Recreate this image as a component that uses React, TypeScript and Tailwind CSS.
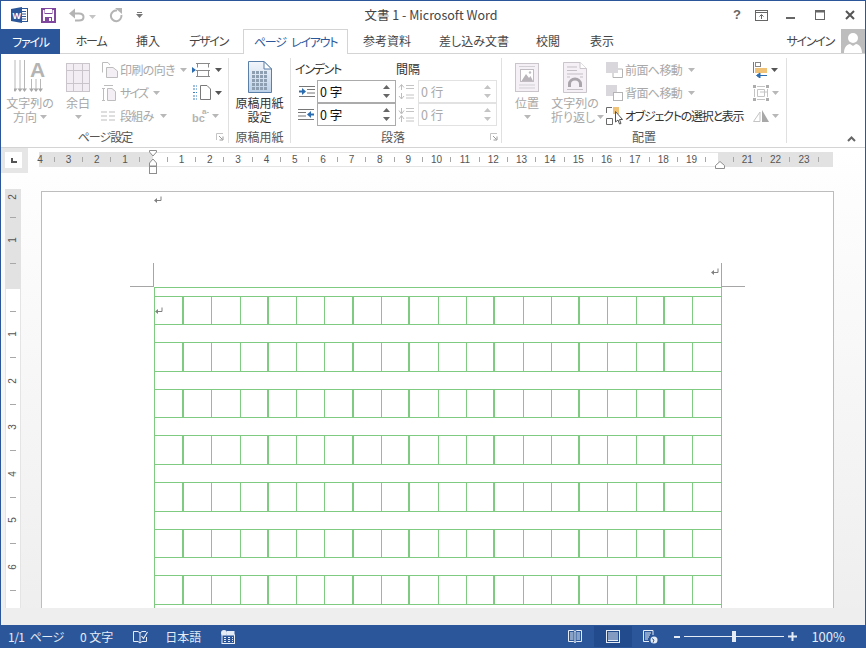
import React from "react";

const GREEN = "border-[#7fcb82]";

function Caret({ c = "#b8b8b8" }: { c?: string }) {
  return (
    <svg width="7" height="4" viewBox="0 0 7 4" className="inline-block shrink-0">
      <path d="M0 0h7L3.5 4z" fill={c} />
    </svg>
  );
}

function ReturnMark() {
  return (
    <svg width="8" height="8" viewBox="0 0 8 8" className="shrink-0">
      <path d="M7 0.5V4.5H2" fill="none" stroke="#808080" />
      <path d="M0 4.5L3 2V7z" fill="#808080" />
    </svg>
  );
}

function Launcher() {
  return (
    <svg width="8" height="8" viewBox="0 0 8 8" className="shrink-0">
      <path d="M0.5 7V0.5H7" fill="none" stroke="#c4c4c4" />
      <path d="M3 3L6.5 6.5M7 3.5V7H3.5" fill="none" stroke="#9a9a9a" />
    </svg>
  );
}

function WordLogo() {
  return (
    <svg width="17" height="16" viewBox="0 0 17 16">
      <rect x="7.5" y="1.5" width="9" height="13" fill="#fff" stroke="#2b579a" />
      <path d="M11 4.5h4M11 7h4M11 9.5h4M11 12h4" stroke="#2b579a" />
      <path d="M0 2L11 0V16L0 14z" fill="#2b579a" />
      <text x="1.5" y="11.5" fontSize="9" fontWeight="700" fill="#fff" fontFamily="Liberation Sans">W</text>
    </svg>
  );
}

function SaveIcon() {
  return (
    <svg width="15" height="15" viewBox="0 0 15 15">
      <path d="M1 1H14V14H1z" fill="#fff" stroke="#80479e" strokeWidth="2" />
      <rect x="3.5" y="1" width="8" height="5" fill="#80479e" />
      <rect x="4" y="1" width="7" height="4" fill="#fff" />
      <rect x="4" y="9" width="7" height="5" fill="#80479e" />
      <rect x="8" y="10" width="2" height="3" fill="#fff" />
    </svg>
  );
}

function Undo() {
  return (
    <svg width="16" height="14" viewBox="0 0 16 14">
      <path d="M2 5.5H10C13 5.5 14.5 7 14.5 9S13 12.5 10 12.5H6" fill="none" stroke="#b4b4b4" strokeWidth="2" />
      <path d="M0 5.5L6 0.5V10.5z" fill="#b4b4b4" />
    </svg>
  );
}

function Redo() {
  return (
    <svg width="14" height="15" viewBox="0 0 14 15">
      <path d="M8 2.6A5.3 5.3 0 1 0 12.4 7" fill="none" stroke="#b4b4b4" strokeWidth="2" />
      <path d="M6 0H13V6z" fill="#b4b4b4" />
    </svg>
  );
}

function TextDirIcon() {
  return (
    <svg width="33" height="36" viewBox="0 0 33 36">
      <text x="16" y="18" fontSize="21" fontWeight="700" fill="#b4b4b4" fontFamily="Liberation Sans">A</text>
      {[1, 6, 10.5].map((x) => (
        <path key={x} d={`M${x} 1V32`} stroke="#b8b8b8" />
      ))}
      {[17.5, 22, 26.5].map((x) => (
        <path key={x} d={`M${x} 20V32`} stroke="#b8b8b8" />
      ))}
      {[1, 6, 10.5, 17.5, 22, 26.5].map((x) => (
        <path key={"h" + x} d={`M${x - 2.5} 29.5L${x} 33L${x + 2.5} 29.5z`} fill="#a8a8a8" />
      ))}
    </svg>
  );
}

function MarginIcon() {
  return (
    <svg width="24" height="29" viewBox="0 0 24 29">
      <rect x="0.5" y="0.5" width="23" height="28" fill="#f2edf3" stroke="#c9c5cb" />
      <path d="M7.5 0V29M16.5 0V29M0 7.5H24M0 20.5H24" stroke="#c9c5cb" />
    </svg>
  );
}

function OrientIcon() {
  return (
    <svg width="17" height="16" viewBox="0 0 17 16">
      <path d="M1.5 10.5V0.5H7L9 3" fill="#fff" stroke="#bdbdbd" />
      <path d="M5.5 5.5H12L16.5 9V15.5H5.5z" fill="#f3eff4" stroke="#bdbdbd" />
    </svg>
  );
}

function SizeIcon() {
  return (
    <svg width="15" height="16" viewBox="0 0 15 16">
      <path d="M3 0.5H12M1 3.5H4M1 15.5H4M2.5 3.5V15.5" stroke="#bdbdbd" fill="none" />
      <path d="M6.5 3.5H11L14.5 6.5V15.5H6.5z" fill="#f3eff4" stroke="#bdbdbd" />
    </svg>
  );
}

function ColumnsIcon() {
  return (
    <svg width="14" height="10" viewBox="0 0 14 10">
      <path d="M0 1H6M8 1H14M0 5H6M8 5H14M0 9H6M8 9H14" stroke="#bdbdbd" />
    </svg>
  );
}

function MarginsSmall() {
  return (
    <svg width="20" height="14" viewBox="0 0 20 14">
      <path d="M0 4L4 7L0 10z" fill="#2b6cb0" />
      <path d="M4 0.5H18M5.5 0.5V4.5M16.5 0.5V4.5M4 7.5H18M4 13.5H18M5.5 8V13.5M16.5 8V13.5" stroke="#8a8a8a" fill="none" />
    </svg>
  );
}

function BreakIcon() {
  return (
    <svg width="20" height="15" viewBox="0 0 20 15">
      <path d="M1 1H5M1 4H5M1 7.5H5M1 11H5M1 14H5" stroke="#3f7fc0" strokeDasharray="2 1" />
      <path d="M8.5 0.5H15L18.5 4V14.5H8.5z" fill="#fff" stroke="#7a7a7a" />
    </svg>
  );
}

function HyphenIcon() {
  return (
    <svg width="17" height="15" viewBox="0 0 17 15">
      <text x="0" y="14" fontSize="11" fontWeight="700" fill="#b4b4b4" fontFamily="Liberation Sans">bc</text>
      <text x="10" y="6" fontSize="8" fontWeight="700" fill="#b4b4b4" fontFamily="Liberation Sans">a-</text>
    </svg>
  );
}

function GenkoIcon() {
  return (
    <svg width="26" height="33" viewBox="0 0 26 33">
      <defs>
        <linearGradient id="g1" x1="0" y1="0" x2="0" y2="1">
          <stop offset="0" stopColor="#f3f6fb" />
          <stop offset="1" stopColor="#bcd1e8" />
        </linearGradient>
      </defs>
      <path d="M1.5 0.5H17L24.5 8V31.5H1.5z" fill="url(#g1)" stroke="#5a7fa8" />
      <path d="M17 0.5V8H24.5z" fill="#fff" stroke="#5a7fa8" />
      {[10, 14, 18, 22, 26].map((y) =>
        [5, 9, 13, 17].map((x) => <rect key={x + "-" + y} x={x} y={y} width="3" height="3" fill="#8f9fb2" />)
      )}
    </svg>
  );
}

function PositionIcon() {
  return (
    <svg width="24" height="29" viewBox="0 0 24 29">
      <rect x="0.5" y="0.5" width="23" height="28" fill="#f4f0f5" stroke="#c9c5cb" />
      <rect x="5.5" y="6.5" width="13" height="12" fill="#fff" stroke="#c0bcc2" />
      <path d="M6.5 18L11 11L14 15L15.5 13L18 18z" fill="#b8b4ba" />
      <circle cx="15" cy="9.5" r="1.2" fill="#c0bcc2" />
      <path d="M4 3.5H20M4 22H20M4 25H20" stroke="#d3d0d5" />
    </svg>
  );
}

function WrapIcon() {
  return (
    <svg width="24" height="31" viewBox="0 0 24 31">
      <path d="M0.5 0.5H17L23.5 6.5V30.5H0.5z" fill="#f4f0f5" stroke="#c9c5cb" />
      <path d="M17 0.5V6.5H23.5" fill="#fff" stroke="#c9c5cb" />
      <path d="M4 5H14M4 8.5H14M4 12H20M4 15H7M17 15H20" stroke="#c3bfc5" />
      <path d="M5 25V22A7 6.5 0 0 1 19 22V25H16V22A4 3.5 0 0 0 8 22V25z" fill="#a9a5ab" />
      <path d="M4 27.5H20" stroke="#c3bfc5" />
    </svg>
  );
}

function ForwardIcon({ back }: { back?: boolean }) {
  return (
    <svg width="17" height="16" viewBox="0 0 17 16">
      {back ? (
        <>
          <rect x="0" y="0" width="11" height="11" fill="#dad7dc" />
          <rect x="7.5" y="7.5" width="9" height="8" fill="#fff" stroke="#b4b4b4" />
        </>
      ) : (
        <>
          <path d="M7 7H16.5V15.5H7z" fill="#fff" stroke="#b4b4b4" />
          <rect x="0" y="0" width="12" height="11" fill="#dad7dc" />
        </>
      )}
    </svg>
  );
}

function SelectIcon() {
  return (
    <svg width="17" height="18" viewBox="0 0 17 18">
      <path d="M0.5 6V0.5H6M0.5 17.5V11.5H6.5V17.5z" fill="none" stroke="#6a6a6a" />
      <rect x="7" y="0" width="6" height="7" fill="#f0c277" />
      <path d="M9.5 4.5V15L12 13L13.5 17L15 16.5L13.5 12.5H16.5z" fill="#fff" stroke="#555" />
    </svg>
  );
}

function AlignIcon() {
  return (
    <svg width="15" height="16" viewBox="0 0 15 16">
      <path d="M0.5 0V11" stroke="#7a7a7a" />
      <rect x="2.5" y="0.5" width="5" height="4" fill="#fff" stroke="#888" />
      <rect x="2" y="6" width="12" height="5" fill="#f0c277" />
      <path d="M14 13.5H5M7 11L3.5 13.5L7 16z" fill="#2b6cb0" stroke="#2b6cb0" />
    </svg>
  );
}

function GroupIcon() {
  return (
    <svg width="16" height="16" viewBox="0 0 16 16">
      {[0, 13].map((x) =>
        [0, 13].map((y) => <rect key={x + "," + y} x={x} y={y} width="3" height="3" fill="#adadad" />)
      )}
      <path d="M4.5 4.5H11.5V11.5H4.5zM7 7H14M1.5 4V12M14.5 4V12M4 1.5H12M4 14.5H12" fill="none" stroke="#c4c4c4" />
    </svg>
  );
}

function RotateIcon() {
  return (
    <svg width="16" height="13" viewBox="0 0 16 13">
      <path d="M0.5 12.5L7 3V12.5z" fill="none" stroke="#c4c4c4" />
      <path d="M9 1V13H16z" fill="#a8a8a8" />
    </svg>
  );
}

function IndentIcon({ right }: { right?: boolean }) {
  return (
    <svg width="17" height="11" viewBox="0 0 17 11">
      {right ? (
        <>
          <path d="M0 0.5H16M0 3.5H8M0 7H8M0 10.5H16" stroke="#777" />
          <path d="M16 5.5H12" stroke="#2b6cb0" strokeWidth="2" />
          <path d="M13 2L9 5.5L13 9z" fill="#2b6cb0" />
        </>
      ) : (
        <>
          <path d="M1 0.5H17M9 3.5H17M9 7H17M1 10.5H17" stroke="#777" />
          <path d="M1 5.5H5" stroke="#2b6cb0" strokeWidth="2" />
          <path d="M4 2L8 5.5L4 9z" fill="#2b6cb0" />
        </>
      )}
    </svg>
  );
}

function SpaceIcon({ flip }: { flip?: boolean }) {
  return (
    <svg width="17" height="16" viewBox="0 0 17 16">
      <path d="M8 1.5H16M8 4.5H16M8 11H16M8 14H16" stroke="#c4c4c4" />
      {flip ? (
        <path d="M3.5 1V6M1 3.5L3.5 7L6 3.5M3.5 9V15M1 12L3.5 8.5L6 12" fill="none" stroke="#bdbdbd" />
      ) : (
        <path d="M3.5 1V6M1 3.5L3.5 0.5L6 3.5M3.5 9V15M1 12L3.5 15L6 12" fill="none" stroke="#bdbdbd" />
      )}
    </svg>
  );
}

function Spin({ c }: { c: string }) {
  return (
    <div className="flex flex-col gap-[5px] pr-[5px]">
      <svg width="7" height="4" viewBox="0 0 7 4"><path d="M0 4L3.5 0L7 4z" fill={c} /></svg>
      <svg width="7" height="4" viewBox="0 0 7 4"><path d="M0 0H7L3.5 4z" fill={c} /></svg>
    </div>
  );
}

function BigButton({ w, icon, lines, caret, c = "text-[#a8a8a8]" }: { w: string; icon: React.ReactNode; lines: React.ReactNode[]; caret?: boolean; c?: string }) {
  return (
    <div className={`${w} shrink-0 flex flex-col items-center ${c} whitespace-nowrap`}>
      <div className="h-[38px] flex items-center justify-center">{icon}</div>
      {lines.map((l, i) => (
        <div key={i} className="h-[14px] leading-[14px] flex items-center gap-[3px]">{l}</div>
      ))}
      {caret && <div className="h-[14px] flex items-center"><Caret /></div>}
    </div>
  );
}

function SmallRow({ icon, label, caretGap, dark, track }: { icon: React.ReactNode; label: string; caretGap: string; dark?: boolean; track: string }) {
  return (
    <div className={`h-[23px] flex items-center whitespace-nowrap ${dark ? "text-[#333]" : "text-[#a8a8a8]"}`}>
      <div className="w-[19px] flex items-center justify-start shrink-0">{icon}</div>
      <span className={track}>{label}</span>
      {!dark && <span className={caretGap}><Caret /></span>}
    </div>
  );
}

function IconRow({ icon, dark }: { icon: React.ReactNode; dark?: boolean }) {
  return (
    <div className="h-[23px] flex items-center gap-[3px]">
      {icon}
      <Caret c={dark ? "#555" : "#b8b8b8"} />
    </div>
  );
}

function GroupLabel({ w, pad, text, launcherGap, track }: { w: string; pad?: string; text: string; launcherGap?: string; track?: string }) {
  return (
    <div className={`h-[13px] flex items-center ${pad ?? ""}`}>
      <div className={`${w} text-center leading-[16px] text-[#555] ${track ?? ""}`}>{text}</div>
      {launcherGap && <div className={launcherGap}><Launcher /></div>}
    </div>
  );
}

function HRuler({ items }: { items: (number | null)[] }) {
  return (
    <>
      {items.map((n, i) => (
        <div key={i} className="w-[14.175px] h-full shrink-0 flex items-center justify-center overflow-visible">
          {n === null ? (
            <span className="w-px h-[5px] bg-[#a8a8a8] block" />
          ) : n === 0 ? null : (
            <span className="text-[10px] leading-none text-[#555] font-['Liberation_Sans',sans-serif]">{n}</span>
          )}
        </div>
      ))}
    </>
  );
}

function VItem({ n, h }: { n: number | null; h: string }) {
  return (
    <div className={`${h} w-full flex items-center justify-center`}>
      {n === null ? (
        <span className="block w-[6px] h-px bg-[#a8a8a8]" />
      ) : (
        <span className="block -rotate-90 text-[10px] leading-none text-[#555] font-['Liberation_Sans',sans-serif]">{n}</span>
      )}
    </div>
  );
}

const midRuler: (number | null)[] = [];
for (let i = 0; i < 20; i++) {
  midRuler.push(i);
  midRuler.push(null);
}
const rightRuler: (number | null)[] = [null, 21, null, 22, null, 23, null];

const thick = [0, 3, 6, 8, 11, 14, 17];
const rowHeights = ["h-[29px]", "h-[30px]", "h-[29px]", "h-[30px]", "h-[30px]", "h-[29px]", "h-[30px]"];

function GridRow({ h, mark }: { h: string; mark?: boolean }) {
  return (
    <div className={`${h} flex border-y ${GREEN} box-border`}>
      {Array.from({ length: 20 }, (_, i) => (
        <div
          key={i}
          className={`${i === 0 ? "w-[29px]" : "w-[28.3px]"} shrink-0 box-border flex items-center ${GREEN} ${i === 19 ? "" : thick.includes(i) ? "border-r-2" : "border-r"}`}
        >
          {mark && i === 0 && <ReturnMark />}
        </div>
      ))}
    </div>
  );
}

const KANA = "tracking-[-1.25px]";

export default function App() {
  return (
    <div className="w-[866px] h-[648px] box-border border-x border-t border-[#2b579a] bg-white flex flex-col overflow-hidden text-[12px] leading-[14px] text-[#444] font-['Noto_Sans_CJK_JP','Noto_Sans',sans-serif] [font-feature-settings:'palt']">
      {/* Title bar */}
      <div className="h-[28px] flex items-center shrink-0">
        <div className="w-[360px] flex items-center pl-[10px] shrink-0">
          <WordLogo />
          <div className="ml-[13px]"><SaveIcon /></div>
          <div className="ml-[13px]"><Undo /></div>
          <div className="ml-[4px]"><Caret c="#c4c4c4" /></div>
          <div className="ml-[13px]"><Redo /></div>
          <div className="ml-[13px] flex flex-col items-center gap-px">
            <span className="block w-[5px] h-px bg-[#777]" />
            <Caret c="#777" />
          </div>
        </div>
        <div className="w-[140px] text-center whitespace-nowrap text-[12.5px] text-[#444]">文書 1 - Microsoft Word</div>
        <div className="flex-1 flex items-center justify-end pr-[10px] text-[#666]">
          <span className="w-[12px] text-center text-[13px] font-bold font-['Liberation_Sans',sans-serif]">?</span>
          <svg width="13" height="11" viewBox="0 0 13 11" className="ml-[12px]">
            <rect x="0.5" y="0.5" width="12" height="10" fill="none" stroke="#666" />
            <path d="M0 2.5H13" stroke="#666" />
            <path d="M6.5 9V5M4.5 6.5L6.5 4.5L8.5 6.5" fill="none" stroke="#666" />
          </svg>
          <span className="block ml-[18px] w-[9px] h-[2px] bg-[#666] mt-[6px]" />
          <svg width="10" height="10" viewBox="0 0 10 10" className="ml-[20px]">
            <rect x="0.5" y="0.5" width="9" height="9" fill="none" stroke="#666" />
            <path d="M0 1.5H10" stroke="#666" strokeWidth="2" />
          </svg>
          <svg width="10" height="10" viewBox="0 0 10 10" className="ml-[20px]">
            <path d="M1 1L9 9M9 1L1 9" stroke="#555" strokeWidth="2" />
          </svg>
        </div>
      </div>

      {/* Tabs */}
      <div className="h-[25px] flex border-b border-[#d4d4d4] shrink-0 box-border">
        <div className={`w-[59px] h-[25px] bg-[#2b579a] text-white flex items-center justify-center ${KANA}`}>ファイル</div>
        <div className={`w-[62px] flex items-center justify-center ${KANA}`}>ホーム</div>
        <div className="w-[52px] flex items-center justify-center">挿入</div>
        <div className={`w-[69px] flex items-center justify-center ${KANA}`}>デザイン</div>
        <div className={`w-[105px] h-[25px] box-border bg-white border-x border-t border-[#d4d4d4] text-[#2b579a] flex items-center justify-center ${KANA} [word-spacing:4px]`}>ページ レイアウト</div>
        <div className="w-[78px] flex items-center justify-center">参考資料</div>
        <div className="w-[96px] flex items-center justify-center">差し込み文書</div>
        <div className="w-[52px] flex items-center justify-center">校閲</div>
        <div className="w-[56px] flex items-center justify-center">表示</div>
        <div className="flex-1 flex items-center justify-end">
          <span className={`text-[#444] ${KANA}`}>サインイン</span>
          <div className="ml-[7px] w-[24px] h-[24px] bg-[#bdbdbd] overflow-hidden flex items-end">
            <svg width="24" height="24" viewBox="0 0 24 24">
              <circle cx="12" cy="9" r="5" fill="#fff" />
              <path d="M3 24C3 18 6 15.5 9 15L12 17L15 15C18 15.5 21 18 21 24z" fill="#fff" />
            </svg>
          </div>
        </div>
      </div>

      {/* Ribbon */}
      <div className="h-[94px] shrink-0 box-border border-b border-[#d4d4d4] flex items-start pt-[4px]">
        {/* Page setup */}
        <div className="w-[228px] h-[85px] shrink-0 border-r border-[#e0e0e0] flex flex-col">
          <div className="h-[72px] flex pl-[4px]">
            <BigButton
              w="w-[50px]"
              icon={<TextDirIcon />}
              lines={["文字列の", <span className="flex items-center gap-[3px]" key="a">方向<Caret /></span>]}
            />
            <BigButton w="w-[46px]" icon={<MarginIcon />} lines={["余白"]} caret />
            <div className="w-[91px] shrink-0 flex flex-col">
              <SmallRow icon={<OrientIcon />} label="印刷の向き" caretGap="ml-[5px] flex" track="tracking-[-0.6px]" />
              <SmallRow icon={<SizeIcon />} label="サイズ" caretGap="ml-[6px] flex" track="tracking-[-1.8px]" />
              <SmallRow icon={<ColumnsIcon />} label="段組み" caretGap="ml-[6px] flex" track="tracking-[-0.7px]" />
            </div>
            <div className="w-[34px] shrink-0 flex flex-col">
              <IconRow icon={<MarginsSmall />} dark />
              <IconRow icon={<BreakIcon />} dark />
              <IconRow icon={<HyphenIcon />} />
            </div>
          </div>
          <GroupLabel w="w-[208px]" text="ページ設定" launcherGap="ml-[7px] flex" track="tracking-[-1px]" />
        </div>

        {/* Genko */}
        <div className="w-[62px] h-[85px] shrink-0 border-r border-[#e0e0e0] flex flex-col">
          <div className="h-[72px]">
            <BigButton w="w-[61px]" icon={<GenkoIcon />} lines={["原稿用紙", "設定"]} c="text-[#333]" />
          </div>
          <GroupLabel w="w-[61px]" text="原稿用紙" />
        </div>

        {/* Paragraph */}
        <div className="w-[211px] h-[85px] shrink-0 border-r border-[#e0e0e0] flex flex-col">
          <div className="h-[72px] flex flex-col">
            <div className="h-[22px] flex items-center pl-[4px] text-[#333]">
              <span className={`w-[101px] ${KANA}`}>インデント</span>
              <span>間隔</span>
            </div>
            {[0, 1].map((r) => (
              <div key={r} className="h-[23px] flex items-center pl-[4px]">
                <div className="w-[22px] flex justify-start pl-[3px]"><IndentIcon right={r === 1} /></div>
                <div className="w-[79px] h-[23px] box-border border border-[#ababab] flex items-center justify-between pl-[2px] text-[#111] text-[12.5px]">
                  <span>0 字</span>
                  <Spin c="#666" />
                </div>
                <div className="w-[22px] flex justify-start pl-[2px]"><SpaceIcon flip={r === 1} /></div>
                <div className="w-[79px] h-[23px] box-border border border-[#e2e2e2] flex items-center justify-between pl-[2px] text-[#aaa] text-[12.5px]">
                  <span>0 行</span>
                  <Spin c="#c4c4c4" />
                </div>
              </div>
            ))}
          </div>
          <GroupLabel w="w-[160px]" pad="pl-[22px]" text="段落" launcherGap="ml-[17px] flex" />
        </div>

        {/* Arrange */}
        <div className="w-[285px] h-[85px] shrink-0 border-r border-[#e0e0e0] flex flex-col">
          <div className="h-[72px] flex">
            <BigButton w="w-[50px]" icon={<PositionIcon />} lines={["位置"]} caret />
            <BigButton
              w="w-[46px]"
              icon={<WrapIcon />}
              lines={["文字列の", <span className="flex items-center gap-[2px] ml-[5px]" key="b">折り返し<Caret /></span>]}
            />
            <div className="ml-[8px] w-[146px] shrink-0 flex flex-col">
              <SmallRow icon={<ForwardIcon />} label="前面へ移動" caretGap="ml-[6px] flex" track="tracking-[-0.6px]" />
              <SmallRow icon={<ForwardIcon back />} label="背面へ移動" caretGap="ml-[6px] flex" track="tracking-[-0.6px]" />
              <SmallRow icon={<SelectIcon />} label="オブジェクトの選択と表示" caretGap="" dark track={KANA} />
            </div>
            <div className="w-[34px] shrink-0 flex flex-col pl-[1px]">
              <IconRow icon={<AlignIcon />} dark />
              <IconRow icon={<GroupIcon />} />
              <IconRow icon={<RotateIcon />} />
            </div>
          </div>
          <GroupLabel w="w-[284px]" text="配置" />
        </div>

        <div className="flex-1 h-[85px] flex items-end justify-end pr-[9px]">
          <svg width="9" height="6" viewBox="0 0 9 6" className="mb-[1px]">
            <path d="M1 5L4.5 1.5L8 5" fill="none" stroke="#666" strokeWidth="2" />
          </svg>
        </div>
      </div>

      {/* Document area */}
      <div className="flex-1 min-h-0 flex flex-col bg-linear-to-b from-[#ffffff] to-[#eeeeee]">
        {/* Horizontal ruler */}
        <div className="h-[25px] shrink-0 flex">
          <div className="w-[27px] h-[25px] bg-[#e6e6e6] pl-[4px] pt-[4px]">
            <div className="w-[17px] h-[16px] bg-white flex items-center justify-center">
              <span className="block w-[6px] h-[5px] mt-[1px] border-l-2 border-b-2 border-[#555]" />
            </div>
          </div>
          <div className="relative ml-[11px] mt-[4px] h-[15px] w-[794px] flex">
            <div className="w-[114px] h-[15px] bg-[#e2e2e2] flex">
              <div className="flex -ml-[6px]">
                <HRuler items={[4, null, 3, null, 2, null, 1, null]} />
              </div>
            </div>
            <div className="w-[565px] h-[15px] box-border border-y border-[#e4e4e4] bg-white flex overflow-hidden">
              <div className="flex -ml-[7px]">
                <HRuler items={midRuler} />
              </div>
            </div>
            <div className="w-[115px] h-[15px] bg-[#e2e2e2] flex overflow-hidden">
              <div className="flex ml-[8px]">
                <HRuler items={rightRuler} />
              </div>
            </div>
            <svg width="10" height="25" viewBox="0 0 10 25" className="absolute left-[109px] -top-[2px]">
              <path d="M1.5 0.5H8.5V2L5 6L1.5 2z" fill="#fff" stroke="#8e8e8e" />
              <path d="M5 9L1.5 13V16H8.5V13z" fill="#fff" stroke="#8e8e8e" />
              <rect x="1.5" y="16.5" width="7" height="7" fill="#fff" stroke="#8e8e8e" />
            </svg>
            <svg width="10" height="8" viewBox="0 0 10 8" className="absolute left-[676px] top-[9px]">
              <path d="M5 0.5L9.5 4.5V7.5H0.5V4.5z" fill="#fff" stroke="#8e8e8e" />
            </svg>
          </div>
        </div>

        {/* Vertical ruler + page */}
        <div className="h-[435px] shrink-0 flex overflow-hidden">
          <div className="ml-[4px] w-[16px] shrink-0 pt-[16px] flex flex-col">
            <div className="h-[100px] bg-[#e2e2e2] overflow-hidden shrink-0">
              <VItem n={2} h="h-[16.6px]" />
              <VItem n={null} h="h-[23.25px]" />
              <VItem n={1} h="h-[23.25px]" />
              <VItem n={null} h="h-[23.25px]" />
            </div>
            <div className="flex-1 bg-white box-border border-x border-[#e4e4e4] pt-[10.4px] overflow-hidden">
              {[null, 1, null, 2, null, 3, null, 4, null, 5, null, 6, null].map((n, i) => (
                <VItem key={i} n={n} h="h-[23.25px]" />
              ))}
            </div>
          </div>
          <div className="ml-[20px] mt-[18px] w-[793px] shrink-0 box-border border-x border-t border-[#bdbdbd] bg-white overflow-hidden">
            <div className="h-[71px] pl-[112px] pt-[4px]"><ReturnMark /></div>
            <div className="h-[24px] flex ml-[88px]">
              <div className="w-[24px] box-border border-b border-r border-[#a6a6a6]" />
              <div className="w-[567px] flex items-center justify-end pr-[2px] pb-[7px]"><ReturnMark /></div>
              <div className="w-[24px] box-border border-b border-l border-[#a6a6a6]" />
            </div>
            <div className={`ml-[112px] w-[568px] box-border border-x ${GREEN} h-[330px]`}>
              <div className={`h-[9px] box-border border-t ${GREEN}`} />
              {rowHeights.map((h, i) => (
                <div key={i} className="mb-[17px]">
                  <GridRow h={h} mark={i === 0} />
                </div>
              ))}
            </div>
          </div>
        </div>
        <div className="flex-1 bg-[#eeeeee]" />
      </div>

      {/* Status bar */}
      <div className="h-[23px] shrink-0 bg-[#2b579a] text-[#e6ecf5] flex items-center">
        <span className="ml-[7px] w-[56px] whitespace-nowrap tracking-[-0.5px] [word-spacing:3px]">1/1 ページ</span>
        <span className="ml-[16px]">0 文字</span>
        <svg width="15" height="14" viewBox="0 0 15 14" className="ml-[20px]">
          <path d="M0.5 1.5H5L7 3V13L5 11.5H0.5zM7 3L9 1.5H13M7 13L9 11.5H13.5V7" fill="none" stroke="#e6ecf5" />
          <path d="M8.5 6L10.5 8.5L14.5 2" fill="none" stroke="#e6ecf5" strokeWidth="1.2" />
        </svg>
        <span className="ml-[17px]">日本語</span>
        <svg width="14" height="14" viewBox="0 0 14 14" className="ml-[20px]">
          <circle cx="3" cy="3" r="3" fill="#e6ecf5" />
          <rect x="1" y="5" width="12.5" height="8.5" fill="#2b579a" stroke="#e6ecf5" />
          <rect x="6" y="1" width="7.5" height="4" fill="#e6ecf5" />
          <path d="M3 7.5H5M7 7.5H9M11 7.5H12M3 9.5H5M7 9.5H9M11 9.5H12M3 11.5H5M7 11.5H9M11 11.5H12" stroke="#e6ecf5" />
        </svg>
        <div className="flex-1" />
        <svg width="14" height="13" viewBox="0 0 14 13" className="shrink-0">
          <path d="M0.5 0.5H5.5L7 1.5L8.5 0.5H13.5V11.5H8.5L7 12.5L5.5 11.5H0.5zM7 1.5V12.5" fill="none" stroke="#e6ecf5" />
          <path d="M2 3H5.5M2 5H5.5M2 7H5.5M2 9H5.5M8.5 3H12M8.5 5H12M8.5 7H12M8.5 9H12" stroke="#e6ecf5" />
        </svg>
        <div className="ml-[12px] w-[38px] h-[21px] bg-[#214b8c] flex items-center justify-center shrink-0">
          <svg width="14" height="13" viewBox="0 0 14 13">
            <rect x="0.5" y="0.5" width="13" height="12" fill="none" stroke="#e6ecf5" />
            <path d="M2 3H12M2 5H12M2 7H12M2 9H12M2 10.5H12" stroke="#e6ecf5" />
          </svg>
        </div>
        <svg width="15" height="14" viewBox="0 0 15 14" className="ml-[11px] shrink-0">
          <path d="M0.5 0.5H10V5M0.5 0.5V11.5H6" fill="none" stroke="#e6ecf5" />
          <path d="M2 3H8M2 5H7M2 7H6M2 9H5" stroke="#e6ecf5" />
          <circle cx="11" cy="10" r="3.5" fill="#e6ecf5" />
          <path d="M9 8.5L11 10L10 12.5" fill="none" stroke="#2b579a" />
        </svg>
        <span className="block ml-[16px] w-[6px] h-[2px] bg-[#e6ecf5]" />
        <div className="ml-[4px] w-[100px] flex items-center">
          <span className="block w-[48px] h-px bg-[#e6ecf5]" />
          <span className="block w-[4px] h-[11px] bg-[#e6ecf5]" />
          <span className="block w-[48px] h-px bg-[#e6ecf5]" />
        </div>
        <svg width="9" height="9" viewBox="0 0 9 9" className="ml-[4px]">
          <path d="M0 4.5H9M4.5 0V9" stroke="#e6ecf5" strokeWidth="2" />
        </svg>
        <span className="ml-[14px] mr-[20px] text-[13px]">100%</span>
      </div>
    </div>
  );
}
